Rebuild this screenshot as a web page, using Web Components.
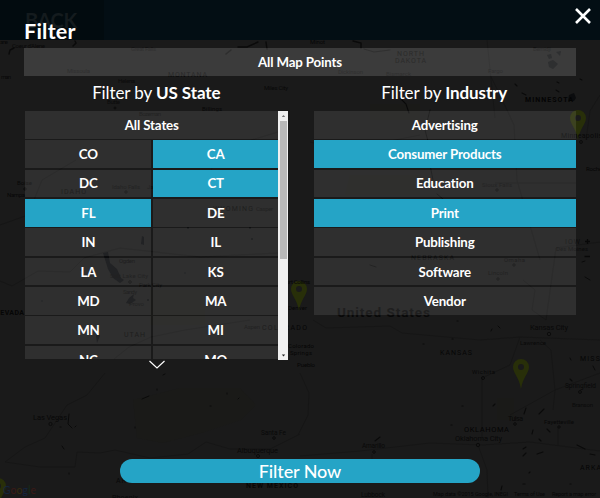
<!DOCTYPE html>
<html lang="en">
<head>
<meta charset="utf-8">
<title>Filter</title>
<style>
html,body{margin:0;width:600px;height:498px;overflow:hidden;background:#191919;font-family:Lato,"Open Sans",sans-serif;color:#fff}
</style>
</head>
<body>
<filter-app></filter-app>
<script>
const define=(name,html,init)=>customElements.define(name,class extends HTMLElement{
  constructor(){
    super();
    const t=document.createElement('template');
    t.innerHTML=html;
    this.attachShadow({mode:'open'}).append(t.content.cloneNode(true));
  }
  connectedCallback(){ if(init) init(this,this.shadowRoot); }
});

/* label: [text, x, baseline, size, width, fill, weight] */
const labels=[
 ['MONTANA',168,77,7,39,'#070707',400],['Missoula',67,73,6,23,'#0c0c0c',400],['Helena',118,83,6,17,'#0b0b0b',400],
 ['Great Falls',131,51,6,25,'#0d0d0d',400],["Coeur d'Alene",12,48,6,33,'#080808',400],['ane',0,44,6,8,'#080808',400],
 ['man',1,79,6,10,'#080808',400],['Butte',107,104,6,13,'#0b0b0b',400],['Bozeman',139,116,6,22,'#0b0b0b',400],
 ['Billings',202,111,6,20,'#060606',400],['Miles City',264,90,6,24,'#080808',400],
 ['NORTH',397,56,7,27,'#070707',400],['DAKOTA',395,63,7,31,'#070707',400],['Dickinson',338,74,6,25,'#0c0c0c',400],
 ['Bismarck',386,76,6,25,'#0c0c0c',400],['Fargo',488,73,6,15,'#0c0c0c',400],['Bemidji',533,51,6,18,'#0c0c0c',400],['Minot',310,44,6,15,'#060606',400],
 ['MINNESOTA',525,102,7,48,'#040404',700],['Minneapolis',561,138,7,41,'#080808',400],['Rochester',586,171,6,26,'#050505',400],
 ['Sioux Falls',482,187,6,30,'#0d0d0d',400],['IOW',565,244,7,15,'#0a0a0a',400],['Des Moines',556,251,6,32,'#0a0a0a',400],
 ['IDAHO',61,194,7,25,'#090909',400],['Idaho Falls',112,189,6,28,'#0c0c0c',400],['Jackson',147,189,6,22,'#0c0c0c',400],
 ['Boise',17,185,6,15,'#080808',400],['Nampa',7,197,6,18,'#070707',400],['WYOMING',213,211,7,40,'#080808',400],['Casper',256,211,6,17,'#0b0b0b',400],
 ['Ogden',119,263,6,16,'#080808',400],['Salt Lake City',110,278,6,38,'#0b0b0b',400],['Park City',139,287,6,23,'#090909',400],
 ['Sandy',123,294,6,14,'#0a0a0a',400],['Provo',129,306,6,15,'#0a0a0a',400],['NEVADA',-5,315,7,29,'#060606',700],
 ['UTAH',124,337,7,21,'#070707',400],['Aspen',244,329,6,16,'#0b0b0b',400],['COLORADO',262,330,7,45,'#060606',400],
 ['Denver',288,310,6,19,'#050505',400],['Fort Collins',283,284,6,27,'#050505',400],['Colorado',288,348,6,26,'#050505',400],['Springs',290,355,6,22,'#050505',400],['Pueblo',297,367,6,18,'#050505',400],
 ['NEBRASKA',411,260,7,43,'#090909',400],['Omaha',504,262,6,21,'#090909',400],['Lincoln',488,275,6,20,'#0a0a0a',400],
 ['United States',337,317,13.5,93,'#080808',700],['Kansas City',530,330,7.5,38,'#090909',400],['Lawrence',520,345,6,26,'#090909',400],
 ['KANSAS',440,355,7,32,'#060606',400],['Wichita',472,374,6,23,'#080808',400],['MISSOURI',580,361,7,40,'#060606',400],
 ['Springfield',565,388,6.5,31,'#090909',400],['Branson',572,407,6,21,'#0a0a0a',400],['Tulsa',508,421,7,15,'#090909',400],
 ['Fayetteville',544,424,6,30,'#080808',400],['OKLAHOMA',464,432,7.5,45,'#040404',400],['Oklahoma City',455,441,7.5,47,'#090909',400],
 ['Amarillo',362,448,6.5,23,'#090909',400],['Lubbock',361,497,6.5,24,'#090909',400],['ARKANSAS',580,470,7,43,'#050505',400],
 ['Las Vegas',33,420,7.5,34,'#080808',400],['Santa Fe',261,435,6.5,25,'#090909',400],['Albuquerque',237,453,7.5,41,'#090909',400],
 ['ARIZONA',116,483,7,35,'#080808',400],['NEW MEXICO',246,488,7,52,'#070707',700],['Phoenix',112,500,7,26,'#080808',400],
 ['Map data ©2015 Google, INEGI',433,496,5.5,75,'#070707',400],['Terms of Use',514,496,5.5,31,'#070707',400],['Report a map error',552,496,5.5,44,'#070707',400]
];

define('map-backdrop',`<style>
:host{display:block;position:absolute;inset:0;background:#1a1a1a}
svg{display:block;width:600px;height:498px;font-family:Roboto,sans-serif}
</style>
<svg viewBox="0 0 600 498">
<g fill="#1c1b15" opacity=".3"><path d="M133 400L180 388H240L256 405L241 420L205 432L163 443L137 438ZM350 175H420V195H345ZM150 290H205V325H150ZM497 398H514V420H497ZM370 104H420V120H370Z"/></g>
<g fill="none" stroke="#141414" stroke-width=".7">
<path d="M0 281L12 286L38 271L70 272L84 258L120 248L200 257L278 253"/>
<path d="M105 373L87 395L67 405L45 438L25 447L5 462L40 467L75 467L77 452L100 453L115 450L150 458L188 454L206 442L230 449H270L300 434"/>
<path d="M0 225L28 215L42 180L76 160"/><path d="M278 132L222 149L200 191M310 142L345 150L420 135"/>
<path d="M313 320L326 328L390 326L402 333L480 340L520 337L600 340"/>
<path d="M490 75L500 95L514 125L517 180L540 260M487 40L495 118M520 337L510 365L482 378V440"/>
<path d="M300 456L360 451L430 443L482 445L530 442L600 451M478 445L487 470L488 498M600 373L555 390L510 415M540 340L551 350L555 390L553 410M558 427V445"/>
<path d="M300 373L309 393L308 415L298 435M372 454V465M523 280L535 290L532 310L546 320L556 248L600 242M495 183H576M600 95L590 111L586 140"/>
<path d="M250 320L185 330L151 337L129 347L114 359"/>
</g>
<g fill="none" stroke="#0a0a0a" stroke-width="1.4" stroke-linecap="round">
<path d="M75 41L76 43L73 46M9 54L10 50L14 48M226 54L231 50M238 47L247 47L258 42M266 42L267 49M353 41L361 43L361 48" />
<path d="M400 98L406 104L409 113M515 84L517 86M522 93L526 95M557 82L559 83M556 90L559 92M580 79L582 80" stroke-width="1.1"/>
<path d="M364 49L374 52L390 50M430 110L425 130L429 145M430 165L433 180M437 194L443 199M370 265L376 267" stroke-width=".8"/>
<path d="M69 414L68 424L72 428M60 427H61M75 427L76 426M142 399L149 396M157 390V389M163 375L165 374M238 399L239 398M227 394V393M210 406H211M62 446L64 449M69 474V473M135 428V427" stroke-width="1"/>
<path d="M491 331L492 329M498 326L500 328M457 321H458M423 344H424M452 339H453M570 358L571 360M593 366L595 370M585 277L590 280M582 262L585 261" stroke-width="1"/>
<path d="M493 406L495 404M524 414L526 408M539 414L544 409M570 379L572 381M462 406H463M375 441L380 437M451 425H452M533 430L532 434M539 439L541 441M547 429L550 432M523 449L526 447M523 456L526 453M577 445L585 449M590 454L595 455M537 454L543 452M523 484H525M570 484H571M501 490L502 486M529 473L530 472" stroke-width="1.1"/>
</g>
<g fill="#0b0c0e"><path d="M103 253L108 252L110 263L117 269L121 278L124 280L120 283L113 278L108 269ZM129 298L134 294L133 298L136 300L130 304L126 303ZM142 236L144 237L144 245L141 244ZM98 331L100 336L97 343L96 336ZM547 55L551 54L552 58L549 59ZM556 52L561 51L560 56ZM548 62L553 60L558 64L553 69L549 67ZM569 95L574 93L576 98L574 101L568 101Z"/>
<circle cx="188" cy="228" r="1"/><circle cx="250" cy="228" r="1"/><circle cx="252" cy="239" r="1"/><circle cx="148" cy="300" r="1"/><circle cx="42" cy="301" r=".7"/><circle cx="81" cy="270" r="1"/><circle cx="185" cy="273" r=".7"/><path d="M585 241.500H590M587.500 239V244M584.500 256.500H590" stroke="#080808" stroke-width="1.300"/></g>
<g fill="none" stroke="#0b0b0b"><circle cx="50.500" cy="424" r="1.600"/><circle cx="274" cy="438" r="1.300"/><circle cx="258" cy="456" r="1.500"/><circle cx="478" cy="445" r="1.700"/><circle cx="374" cy="452" r="1.300"/><circle cx="483" cy="378" r="1.500"/><circle cx="515" cy="424" r="1.300"/><circle cx="559" cy="427" r="1.200"/><circle cx="580" cy="392" r="1.400"/><circle cx="549" cy="334" r="1.700"/><circle cx="514" cy="265" r="1.200"/><circle cx="498" cy="279" r="1.200"/><circle cx="497" cy="190" r="1.200"/><circle cx="581" cy="142" r="1.400"/><circle cx="25" cy="189" r="1.200"/><circle cx="126" cy="192" r="1.200"/><circle cx="115" cy="108" r="1"/><circle cx="130" cy="282" r="1.300"/></g>
<g id="pins"></g><g id="labels"></g>
<g font-size="10.500" font-family="Lato"><text x="3" y="494" textLength="33"><tspan fill="#14243c">G</tspan><tspan fill="#3a1917">o</tspan><tspan fill="#352b10">o</tspan><tspan fill="#14243c">g</tspan><tspan fill="#142c18">l</tspan><tspan fill="#3a1917">e</tspan></text></g>
</svg>`,(h,r)=>{
  const add=(p,n,a,t)=>{const e=document.createElementNS('http://www.w3.org/2000/svg',n);for(const k in a)e.setAttribute(k,a[k]);if(t)e.textContent=t;p.append(e)};
  for(const [x,y] of [[578,118],[299,289],[521,367],[-2,486]])
    add(r.getElementById('pins'),'path',{d:`M${x} ${y-8}a8 8 0 0 1 8 8c0 6-6 10-8 22c-2-12-8-16-8-22a8 8 0 0 1 8-8zm0 5a3 3 0 1 0 0 6a3 3 0 1 0 0-6z`,fill:'#282f09','fill-rule':'evenodd'});
  for(const [t,x,y,s,w,f,b] of labels)
    add(r.getElementById('labels'),'text',{x,y,'font-size':s,textLength:w,fill:f,'font-weight':b},t);
});

define('page-header',`<style>
:host{display:block;position:absolute;inset:0 0 auto 0;height:40px;background:#030e14}
div{box-sizing:border-box;width:104px;height:40px;padding:10px 0 0 25px;background:#020b0f;color:#141b1e;font-size:20px;line-height:20px;font-weight:700;letter-spacing:-.4px;white-space:nowrap}
</style><div><slot></slot></div>`);

define('filter-option',`<style>
:host{display:flex;align-items:center;justify-content:center;box-sizing:border-box;height:27.6px;background:rgba(255,255,255,.095);font-size:13.3px;font-weight:700;line-height:16px;white-space:nowrap;letter-spacing:-.15px}
:host([selected]){background:#25a4c6}
:host([wide]){grid-column:1/-1}
:host([bar]){height:28px;background:rgba(255,255,255,.145)}
</style><slot></slot>`);

define('filter-group',`<style>
:host{display:block}
h2{margin:0;height:35px;font-size:17px;font-weight:400;line-height:34px;text-align:center;white-space:nowrap;letter-spacing:-.1px;text-indent:-1px}
.body{display:grid;grid-template-columns:1fr;gap:1.75px}
</style><h2>Filter by <b><slot name="title"></slot></b></h2><div class="body"><slot></slot></div>`);

define('scroll-track',`<style>
:host{display:flex;flex-direction:column;align-items:center;width:9.500px;height:249px;background:#f1f1f1}
i{display:block;width:7px;height:138px;background:#b9b9b9;margin-top:1px}
svg{display:block;width:9px;height:9px}.end{margin-top:auto}
</style><svg viewBox="0 0 9 9"><path d="M2.800 6L4.500 4L6.200 6Z" fill="#777"/></svg><i></i><svg class="end" viewBox="0 0 9 9"><path d="M2.800 3.500H6.200L4.500 5.500Z" fill="#222"/></svg>`);

define('state-list',`<style>
:host{display:flex;width:263px;height:248.500px}
.grid{display:grid;grid-template-columns:126.200px 125.200px;gap:1.75px 1.600px;align-content:start;width:253px;height:248.200px;overflow:hidden}
</style><div class="grid"><slot></slot></div><scroll-track></scroll-track>`);

define('submit-button',`<style>
:host{display:flex;justify-content:center;align-items:center;width:360px;height:24px;border-radius:12px;background:#25a4c6;font-size:18px;font-weight:500;line-height:24px;letter-spacing:-.1px}
</style><slot></slot>`);

define('close-icon',`<style>:host{display:block;width:18px;height:18px}svg{display:block}</style>
<svg width="18" height="18" viewBox="0 0 18 18"><path d="M2 2L16 16M16 2L2 16" stroke="#fff" stroke-width="2.600"/></svg>`);

const opt=(list,sel)=>list.map(t=>`<filter-option${sel.includes(t)?' selected':''}>${t}</filter-option>`).join('');

define('filter-dialog',`<style>
:host{display:flex;flex-direction:column;position:relative;width:600px;height:498px;box-sizing:border-box;padding:0 24px}
header{display:flex;justify-content:space-between;height:48px}
h1{margin:18px 0 0;font-size:21.500px;line-height:26px;font-weight:700;letter-spacing:.25px}
close-icon{margin:6.500px -16px 0 0}
.cols{display:flex;justify-content:space-between;padding-left:1.300px}
.states{width:263px}.industry{width:262.500px}
.more{display:block;width:18px;height:10px;margin:.5px 0 0 123.500px}
footer{display:flex;justify-content:center;margin-top:auto;padding-bottom:15px}
</style>
<header><h1>Filter</h1><close-icon></close-icon></header>
<filter-option bar>All Map Points</filter-option>
<div class="cols">
<filter-group class="states"><span slot="title">US State</span><state-list><filter-option wide>All States</filter-option>${opt(['CO','CA','DC','CT','FL','DE','IN','IL','LA','KS','MD','MA','MN','MI','NC','MO'],['CA','CT','FL'])}</state-list>
</filter-group>
<filter-group class="industry"><span slot="title">Industry</span>${opt(['Advertising','Consumer Products','Education','Print','Publishing','Software','Vendor'],['Consumer Products','Print'])}</filter-group>
</div>
<svg class="more" viewBox="0 0 18 10"><path d="M1.500 1L9 8L16.500 1" fill="none" stroke="#fff" stroke-width="1.200"/></svg>
<footer><submit-button>Filter Now</submit-button></footer>`);

define('filter-app',`<style>:host{display:block;position:relative;width:600px;height:498px;overflow:hidden}</style>
<map-backdrop></map-backdrop><page-header>BACK</page-header><filter-dialog></filter-dialog>`);
</script>
</body>
</html>
